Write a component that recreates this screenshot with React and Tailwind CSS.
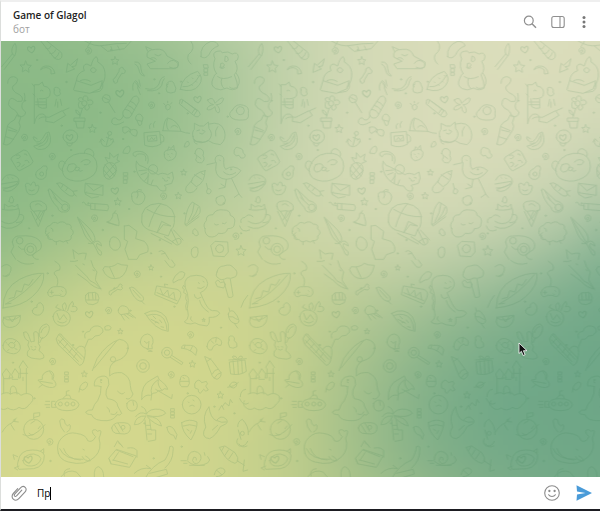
import { useEffect, useRef, useState } from "react";

const COLORS = [
  { rgb: [219, 221, 187], x: 0.65, y: 0.25 },
  { rgb: [136, 184, 132], x: 0.2, y: 0.1 },
  { rgb: [213, 216, 141], x: 0.35, y: 0.75 },
  { rgb: [107, 165, 135], x: 0.8, y: 0.9 },
];

// Four colour points blended by distance, on a plane twisted around its centre.
function paintGradient(canvas) {
  const { width, height } = canvas;
  const ctx = canvas.getContext("2d");
  const image = ctx.createImageData(width, height);
  for (let j = 0; j < height; j++) {
    for (let i = 0; i < width; i++) {
      const dx = i / (width - 1) - 0.5;
      const dy = j / (height - 1) - 0.5;
      const swirl = 0.35 * Math.hypot(dx, dy);
      const theta = swirl * swirl * 6.4;
      const px = Math.min(1, Math.max(0, 0.5 + dx * Math.cos(theta) - dy * Math.sin(theta)));
      const py = Math.min(1, Math.max(0, 0.5 + dx * Math.sin(theta) + dy * Math.cos(theta)));
      let sum = 0;
      const out = [0, 0, 0];
      for (const c of COLORS) {
        const w = Math.max(0, 0.9 - Math.hypot(px - c.x, py - c.y)) ** 4;
        sum += w;
        for (let k = 0; k < 3; k++) out[k] += w * c.rgb[k];
      }
      const at = (j * width + i) * 4;
      for (let k = 0; k < 3; k++) image.data[at + k] = out[k] / sum;
      image.data[at + 3] = 255;
    }
  }
  ctx.putImageData(image, 0, 0);
}

const TOP = [
  // brush, candy roll, kite
  "M2 80L34 42M10 88L40 48M34 42q-6-16 8-32q8 14 0 36zM120 4l40 50q14 10 22-2q4-14-8-20L136 2M134 24q10 8 16-6M146 40q12 4 18-10M160 54q10-2 14-16",
  "M250 2q30 20 60 14t66-6M270 4l-10 16M300 18l20 16l50-8l20-22M330 20l4 12M350 18l6 12",
  // arrow, bone, rainbow
  "M196 96l4-26l8 6l22-20l-6 22l-12 2l8 6zM120 88q16-12 30 2l0 12l12-2q-6-24-28-22q-14 2-14 10z",
  "M338 124q-4-8 4-10l12-20q-2-10 8-12q4-2 6 6q8 2 4 10q-4 4-10 2l-12 20q2 8-6 10q-6 0-6-6z",
  "M402 66q18-2 18 20q0 14 10 20M402 72q10 4 12 18q2 16 16 18",
  // rhino with book
  "M218 148l8-26l44 14l34-14l-6 24l-32 14l-44-8zM226 122q2-24 24-30q-8-18 8-20l12 6q6-24 16-28q6 6 4 16q20 10 22 32q2 26-14 44M270 86q8-8 16 4q-6 14-16 4zM238 122q14-8 30 2M304 128q6 16-8 26l-24 4",
  // cat flying
  "M438 50q-4-22 26-22q26-4 34 20l34 18q4 12-8 20l-76 0l-10-14l24-8zM440 34l-6-14l18 8M462 44q10 8 18 0M448 56q10-8 18 2M500 70q10-14 24-6q12 6 6 18q-14 6-24 0",
  "M570 4q16 22-8 40q-6 16 8 28M600 50q-4-34 30-46q20 0 22 14q-20 6-28 26q-12 16-24 6z",
  // dinosaur player
  "M100 250V134l14 0l10-8l4 12q26 4 18 30q-8 10-30 8M110 176l2 24q12 8 24 4l0-26M104 186h30M104 194h32M100 250q6-30 24-28q14 2 10 22l24 4l36-22l-10-14l-40 20q-22-4-30 4M186 212l18-8M118 152q4-4 8 0M100 140l-6-8M102 168l-6-6",
  // giraffe
  "M160 150q-4-8 6-8q14 2 10 14q8 8-8 12q-12-4-8-18zM166 178l-4 20M178 178l4 18M170 186l0 16",
  // snake
  "M20 130q0-20 18-20q20 4 6 22q-20 10 0 26q28 12 18 26q-14 4-22-6q-12-8-16 6q-6 10 6 20q22 10 22 26M70 160q6 20-6 30q-6 16 10 26q-2 16-18 14",
  // bottle
  "M8 312l12-56q8-12 20-16l8-16l12 6l-6 18q8 10 0 24l-24 36q-14 12-22 4zM20 260l28 12M14 290l24 8M22 270l24 6",
  // sausage, squid, worm
  "M396 150q-4-20 8-28q10 6 6 22l8 20M404 128l12 16M414 120l4 18M434 146q28 8 40-14q4-20 16-22M440 152q32 4 42-16q2-14 8-20",
  // watermelon
  "M538 148q4-40 52-54q20 20 4 42q-18 24-56 12zM546 140q30 4 50-34M560 126l2 2M574 114l2 2M584 124l2 2M572 134l2 2M590 106l2 2",
  // panda standing
  "M646 100q-14-20-4-44q-10-18 6-22q12-4 16 4q18-6 30 4q16-8 18 8q0 12-10 14q14 24-2 40q10 24 10 40q-16 10-32 0q-20 10-34 2q-18-10-8-30q4-12 10-16zM660 70q6-4 10 4q-2 10-10 8zM674 48q8 0 8 12q-4 8-10 4zM650 110q16 12 42 0M662 116q-6 18 8 30M706 100q16 20 4 40q-14 10-24 2M656 82q10 8 14 0",
  // flower
  "M250 190m-8 0a8 8 0 1 0 16 0a8 8 0 1 0-16 0M242 186q-14-4-8-12q10-4 12 6q-2-14 10-12q8 2 4 14q12-6 16 4q0 10-14 8q8 10-2 16q-10 2-8-12q-6 12-18 6q-4-10 0-18M244 206l-8 26M220 234h32v10h-32zM224 244l4 20h20l2-20M236 226q-14-6-12-16q12 2 12 16",
  // lollipop, rolled candy
  "M316 176m-12 0a12 12 0 1 0 24 0a12 12 0 1 0-24 0M308 172l16 8M322 186l20 32",
  "M366 216q-4 14 10 18q10 2 14-6l24-44q2-12-8-16q-10 0-12 6zM372 208q16 2 20 14M380 196q14 4 20 14M388 184q14 4 18 14M368 226q-10 24-24 8q-12-2-12 14q8 14 36-2",
  // duck, ghost, pencil
  "M498 140q-4-12 8-16q12-2 14 10q8 10 2 22q-14 6-24 0q-6-10 0-16zM502 132l-6 4M536 184q-2-6 6-6l52 36q8 10-2 16q-8 2-14-4l-42-34zM546 180l-4 10M582 206l-8 12M588 212l-8 12M552 184l36 28",
  "M494 198q6-10 14 0q2 10-8 12q-8-2-6-12zM488 190l3 4M500 184l0 4M512 188l-3 4",
  // fly, mushroom, bow, mug
  "M620 180q16-14 22 10q20-22 26-14q-4 18-22 18q14 12 8 24q-10 2-12-18q-16 14-24 8q2-12 20-14q-16-4-18-14z",
  "M404 232q4-14 16-8q10 8 4 20l-18-4zM408 242l6 14q10 2 8-12M366 262q-4 16 6 18l12-8q10 18 22 16q6-14 0-18q-8-4-16 0q-10-14-24-8zM384 266q6 0 4 10",
  "M430 278l46-4l4 38q-24 14-48 4zM478 284q14 0 10 20l-10 4M440 288l26-2l2 16l-26 2zM446 300l6-8l6 8l4-6M446 266q-4-10 4-16M458 262q-4-10 4-18",
  // cap, cat loaf
  "M486 272q4-36 14-38q30 6 40 40l-54-2zM500 236q-8 20 2 34M540 274q14 6 26 6M530 262q-10-12-20 0",
  "M576 290q-4-14 4-22l0-18l16 8h12l14-12l2 20q12 14 4 28q-10 18-34 10q-18 4-18-14zM624 252q36-10 46 20q8 26-12 42q-24-2-36-12M604 270l8 4M588 272l8-2M596 280q8 6 14-2M580 300q20 16 40 2M650 260q-10 12-6 28M580 298q-4 12 8 14",
  // fried egg
  "M694 210q12-22 34-14q18 4 14 24q4 20-16 20q-26 2-36-8q-10-12 4-22zM718 212m-12 0a12 12 0 1 0 24 0a12 12 0 1 0-24 0",
  // bananas, coin, anchor
  "M100 300q14 20 34-20l10-4q14 36-12 50q-24 8-34-8q14 0 22-10M100 300q-6-8-2-10l10 6M140 282q8 30-26 38M108 312q20 4 30-24",
  "M206 290m-20 2a22 20 0 1 0 44-4a22 20 0 1 0-44 4M198 308q-2 10 10 10q6-2 6-10",
  "M326 280m-6 0a6 6 0 1 0 12 0a6 6 0 1 0-12 0M324 286l-8 30M300 300q-2 18 16 20q16-2 20-16M296 306l6-10l8 8M328 300l8-4l2 10M316 292l16 6",
  // strawberry, peanut
  "M490 344q-4-12 12-14q20-6 24 8q0 22-24 24q-14-6-12-18zM500 330l4-10l6 6l8-10l2 14M500 342l2 2M512 340l2 2M506 350l2 2M582 340q2-18 16-14q14 6 8 20q8 14-4 22q-16 2-18-10q8-8-2-18zM590 348l10 8",
  // dice, avocado
  "M30 356q2-6 8-8l30-18q10 0 14 8l14 26q-2 8-10 12l-30 16q-6 0-10-8zM46 346q10-4 12 4q-4 8-10 6M70 342q8-2 8 4M48 368q8-4 10 4q-2 8-8 8M72 362q10-4 12 6M62 380l8-6",
  "M104 404q0-12 14-18q8-12 18-8q6 6 0 16q2 20-12 24q-18 2-20-14zM122 402m-6 0a6 6 0 1 0 12 0a6 6 0 1 0-12 0",
  // panda head
  "M184 386q10-40 52-46q40-4 50 24q8 34-18 48q-30 18-60 8q-26-8-24-34zM186 394q-20-12-10-28q8-8 18 4M250 340q0-14 14-14q18 6 14 22M204 374q18-8 22 4q-4 18-20 18q-14-6-2-22zM240 366q16-14 28-2q-2 12-18 10M222 384q8-6 14 0M236 386q-4 10-14 4M232 390q4 8 12 2",
  // pineapple
  "M308 384q6-18 22-16q16 2 16 20q-2 26-22 30q-20-2-16-34zM312 374l28 34M308 390l20 24M326 368l20 24M340 374l-30 34M346 392l-22 22M320 366l-8-14l14 4l0-18l12 14l14-10l-4 18l8 4l-14 6",
  // reclining cat
  "M434 362q4-20-12-20q-16-2-18 8q-10-2-8-10q10-10 30-4q22 10 14 34M406 364q-6 30 16 54q20 20 46 20q10 20 26 14q4-10-4-16l22-6q10-14 2-34l-14 8q-18-8-28 0q-10-4-16-10q-20-8-30-14q-12 0-20-16zM456 388m-14 0a14 14 0 1 0 28 0a14 14 0 1 0-28 0M414 392l24-2M420 404l16-6M440 430l2-30M484 414l6 4M500 412l6 2M490 422q6 4 10 0M430 424l12-16M450 434l6-14",
  // carrot ship, stork
  "M612 392q-34 6-42 34l16 14q26-12 26-48zM572 422l-16 18q-6 14 6 18q18 2 26-14M580 404l22 14M600 398l8 6",
  "M618 374l26-6q-6-22 12-22q16 2 12 22q0 14 6 20q24-16 46 4q-18 24-44 26q-30-2-32-30l2-20M656 360l2 2M668 396q16 16 36 2M676 418l-4 24l-18 4M692 416l22 46l-14 10M714 462l8 10M660 432l12 8",
  // burger, lotus
  "M4 420q10-22 34-14q22 8 14 26l-44 16M2 432l48-8M6 444q30 2 46-18M8 452q24 10 44-20M20 412l2 2M34 414l2 2M74 440q-4-12 8-10l8 6q4-14 12-8l2 10q10-6 10 4q-4 24-22 22q-16 2-18-24zM84 450q8 6 16 0",
  // jelly, carrots
  "M142 452q-2-8 6-4l36 34q20 4 22 18q0 18-18 16q-14 2-18-14q-22-20-28-50zM150 450l18 30M192 502m-10 0a10 10 0 1 0 20 0a10 10 0 1 0-20 0M158 472l24 22",
  "M168 430q8-6 20 4l28 20q8 10 0 14q-10 2-18-6q-20-12-30-32zM186 434l-4 8M200 444l-6 8M216 454l12-2M218 462l8 6",
  // letter
  "M254 430l52 6l0 30l-54-8zM254 430l24 22l28-16M256 456l-4 6l20 12l20-4",
  // ice cream, cigarette
  "M88 500q-4-14 12-16q20-4 26 4q14 4 10 22q-14 6-22 2l-16 2q-10-4-10-14zM90 514l22 46l20-50M98 514l20 30M118 514l-12 26M128 512l-14 22M104 494q10-8 18 4",
  "M270 490l50 4q6 8 0 18l-50-4zM282 492l0 16M270 498l-16-4q-4-12-10-6",
  // cup cat
  "M4 508q20 6 50-2q6 20-10 38q-20 14-42 0M54 524q16-4 14 12q-4 12-22 12M10 506l0-14l12 8q12-6 20 0l8-8l2 14M2 560q30 16 62-14",
  // peach, balloon
  "M392 470q-4-16 14-14q22-6 26 14q-2 22-20 24q-20-2-20-24zM410 456q4 10-2 18M406 454q6-10 16-4",
  "M422 546q-6-54 52-56q54 8 46 58q-2 18-10 20l-8 20l-44-14q-32-6-36-28zM444 560q10-40 36-70M468 578l14-34l28 14l-22-4zM438 508q40 24 84 22M450 580l62 32M510 568l20 42M490 590l28 18M514 604l14-8q14-4 12 12q-10 12-18 4zM518 570l28 30",
  // sandwich, cloud
  "M552 546q4-44 22-60l22 14q6 20-8 28l-34 26zM562 544q16-26 18-54M572 538q14-16 20-36M552 552l4 6l38-28",
  "M612 566q-8-12 4-24q-2-18 20-18q8-18 32-14q20 0 20 16q18 6 12 26q0 14-20 14q-4 18-28 14q-8 14-28 10q-14-8-12-24zM640 552q4 6 12 2M664 550q8 4 12-2",
  "M720 548q-4-14 12-16q10-14 24-2M716 558q6 22 30 12",
  // sheep
  "M134 574q-2-14 14-18q8-14 22-6q16-10 26 2q18 0 14 14q14 12 0 22q4 14-14 14q-8 8-20 0q-16 8-22-4q-18 4-12-12q-12-2-8-12zM144 578l-8 8l12 10M150 564q8 2 6 10M166 606l0 8M196 602l4 8",
  // pen, bell
  "M230 532l28 26q26 24 24 44l-10 6q-20-14-26-36zM234 538l40 66M262 610q14 4 22-6q14-4 18 14l-14-8q-6 6 4 18q14 6 8 18q-8 0-12-14q-8-18-14-24M318 546q18-4 18-26q14-4 14 10q6 16 4 26zM322 548l24 8M340 518l4-6M370 558l14-2l24 18l-4 22l26 8q16 16 10 32l-24 8l-8 14l-26 0M370 558v40l10 6l-8 24l10 28",
  // monkey
  "M34 606q4-20 22-18q40-4 58 12q12 14 4 28l-24 16q4 16 18 14M34 606l4 14l-8 16l14 22M88 628m-18 0a18 18 0 1 0 36 0a18 18 0 1 0-36 0M88 628m-10 0a10 10 0 1 0 20 0a10 10 0 1 0-20 0M56 602m-10 0a10 10 0 1 0 20 0a10 10 0 1 0-20 0M52 620q10 12 18 8",
  "M326 604q4-18 18-12q16 8 14 26q-6 16-20 12q-16-8-12-26zM630 616l12-12l38 2l2 30l-12 14l-32-2zM656 626m-12 0a12 12 0 1 0 24 0a12 12 0 1 0-24 0M572 628q8-12 18-4q4 14-2 26q-8 6-14 0q-6-10-2-22M474 634q8-6 16 2l14 22M482 642l10-2",
  "M216 630l4 26M216 630l16 12q14-4 24-2l-4 18M24 484q2-14 8-16q10 12 4 20q-8 4-12-4zM700 330q4-12 14-6q14 2 12 14q12 8 2 16q-10 4-14-8q-10 6-14-4zM608 74h12l2 10h-12zM610 86h10v10h-10zM610 98h10v8h-10zM368 398h12v8h-12zM368 410h12v8h-12zM368 420h10v10h-10zM616 430l4 16q12 0 10 10q-4 10-12 4q-4-6 2-14",
  "M646 474q14-10 22-6q10 12 2 24q-16 8-22-2q-6-8-2-16zM576 580q-4-10 6-14q12 8 10 18q-8 8-16-4zM366 338q2-16 18-20q8 12-2 22zM550 320q2-16 12-16q8 12-4 16z",
];

const BOTTOM = [
  // surfboard, gamepad
  "M6 144q0-60 50-86q40-20 72-18q4 36-34 70q-30 28-88 34zM14 132q60-30 106-88M24 116l16-4l6-20l16 4l8-24l14 4l12-18M30 130l-16 2M162 4q20 10 14 26q-18 2-16 12q16 14 8 36M140 98q6-20 26-18q30-4 30 18q-4 18-22 8h-14q-18 12-20-8zM152 92v10M147 97h10M182 92l2 2M178 102l2 2",
  // fox
  "M208 4q14 2 22-2M224 16l34 34q6 14 24 20l18 18M300 86q-20 0-42-24l-28-20M270 2q4 20 18 34q-6 20-4 26l14 22M306 30q10 26 36 26q30 0 38-40q-20 0-30-6q-16 14-38 10zM326 22l14 30M246 12l4 2M276 30l4 2",
  // fist, bone
  "M254 106q6-12 18-8q12-4 18 4q8 12 0 26q-14 10-28 4q-12-6-8-26zM262 100l2 20M274 98l2 20M284 100l0 18M256 120h34M324 100q-2-8 6-8l22-12q2-10 8-8q6 4 2 8q6 6-2 10l-10-2l-18 12q0 8-6 4z",
  // ice pop, soda
  "M386 84q6-6 14 0l26 26q6 14-8 14q-20-6-32-40zM396 90l22 24M420 122l10 10M468 78l60 10q16 6 10 24l-10 20l-66-28zM478 86l8 20l14-16l4 20l14-14l4 22M468 98l60 24M492 80l-2-8l10 2M516 60q4-14 20-24q8-4 16 4q-4 20-20 20l-14 8z",
  // dinosaur
  "M552 80q-6-34 34-34q30 0 34 24q0 18-22 28l8 18q14 34 28 36q18-2 22 8q-8 14-32 12q4 18-6 26l-24-4q-12-10-24-2q-14 0-20-6q12-8 12-20q-6-20 0-44q0-22-10-42zM580 104q0 10 10 12l10-4M596 122q4 20 26 34M570 170q-6 8 4 14M592 68l3 2M606 64l3 2M590 84q10 6 20-4M548 76l-4 8l6 4l-2 10l8 4l-2 14l4 8l-4 14l2 12",
  // tree, icecream
  "M648 36q4-18 20-18q22-8 30 6q16 10 6 26q-16 8-26 4q-18 10-26 0q-10-4-4-18zM644 66q6-12 14 2q10-6 16 4l-6 12l-18-4zM668 62l14 50q14 2 14-6l-8-48M682 162q4-14 16-8q14 14 16 28q-2 12-14 8q-18-6-18-28zM684 170q14-2 20 6q6 4 8 2M700 190l10 14M686 152l-2-8M720 142q6-20 20-36",
  // muscle, kraken, jellyfish
  "M94 152q4-12 14-10q-2-12 10-14q14 8 8 26q-8 16-24 10q-10-4-8-12zM156 170q4-22 26-20q26 4 26 26q-4 24-28 22q-22-4-24-28zM168 160l8 20l12-16l10 14M170 184q14 10 26 0M188 150q-10-16 4-22q8 10 2 20M200 152q4-20 14-28q8 8 0 16q16-4 14 10q-6 8-18 4M178 148l-14-6l6-8M352 150q4-16 18-12q16 4 14 22l-24 4q-10-4-8-14zM360 164l10 16M370 164l14 12M378 162l18 10M384 158l20 16",
  // boat
  "M8 172l50-6q2 22-14 32q-20 10-34-2q-8-10-2-24zM8 174q24 16 50-6M24 172l10 14l10-16",
  // pizza half
  "M432 160q36-20 62 10q12 20 8 44q-40-4-70-54zM440 166q30-10 48 10q10 16 10 34M456 168l8 8M476 180l6 8M462 188q6-6 12 2M480 200l8 2M450 178l20 10",
  // bunny and racket
  "M68 218q8-8 14 6l8 22q4-2 10-2l-2-26q8-8 14 4q2 20 0 28q10 10 2 22q18 12 14 22q-10 6-24 2q-14 0-24-8q-4-14 6-20q-10-14-2-24q-16-6-16-26zM114 222q0-26 22-30q12 4 8 20q-6 20-22 24q-8-4-8-14zM120 218q4-16 16-18M124 232l-8 16M90 260l3 1M102 260l3 1M92 268q6 6 12 0",
  // donut
  "M6 256q6-24 28-20q26 8 24 30q-8 20-30 14q-24-6-22-24zM22 254q4-10 14-6q10 6 4 14q-12 6-18-8zM14 246l4 4M44 244l-4 4M48 268l-6-2M20 272l4-4",
  // slide
  "M166 236l8-14q8-2 10 6l66 66q-2 20-14 22l-64-62zM176 226l66 72M172 240l60 64M186 236l-12 14M200 250l-12 14M214 264l-10 14M228 278l-10 14M250 296q6-22 0-34q-16-10-26 8M252 234q-6-18 14-20q6-18 24-16q16 2 16 18q-10 14-24 12q-8 14-20 10q-4 10-10 24",
  // fishing rod
  "M274 332l14-36q30-46 68-58q26 4 26 26q-4 24-24 34q-30 8-32 30l0 20q10-12 36-10q26 12 26 38q0 14 8 26q-8 20-20 14M280 324l66-80M336 298m-8 0a8 8 0 1 0 16 0a8 8 0 1 0-16 0M350 394q14 14 20 4",
  // bulb
  "M418 246q2-22 22-24q18 4 16 26q-6 8-2 18l-16 0q-20-6-20-20zM430 244l8 6l6-6l-2 20M438 268l16 6l-12 0",
  // lollipop, croissant, gift
  "M498 278m-16 0a16 16 0 1 0 32 0a16 16 0 1 0-32 0M498 278m-8 0a8 8 0 1 0 16 0a8 8 0 1 0-16 0M512 286l34 22l-4 6l-34-22M542 264q0-12 14-8q28-2 32 14l-4 16l-10-10q-14-10-32-12zM552 256l-2 8M574 260l-6 12M618 260q2-26 28-28q22 8 14 24q-8 2-12-4q-14 6-16 18q-12 2-14-10zM630 242l8 8M646 234l-2 12M684 240q-4-14 10-12q10 4 6 14q10 6 8 18q-12 8-22 2q-8-14-2-22z",
  "M686 306l46-6l4 34q-20 14-46 8zM684 300l52-4M696 302l4 40M710 302l2 40M722 300l2 38M706 298q-16-4-10-10q10-2 14 10q6-14 14-8q2 8-12 8",
  // ball, pen
  "M426 318m-19 0a19 19 0 1 0 38 0a19 19 0 1 0-38 0M426 318m-10 0a10 10 0 1 0 20 0a10 10 0 1 0-20 0M612 290l18 8l30 40q2 14-12 20q-10-2-14-10zM618 304l12-8M640 354q8-14 20-16M634 342q6-14 16-14",
  // castle on cloud
  "M8 400v-46l-4-12l12-16l12 16l-4 12h12l-4-10l10-18l12 16l-2 12l6 0v-28l-4-4l12-20l14 20l-4 4v74M28 402q-2-24 8-24t12 24M56 340h24M10 356h16M34 358h16M66 352l0 10M2 402q16-8 26 0q20-10 32 4q20-12 34 2q6 14-8 24q-14 22-32 10q-16 14-34 2q-14 10-26-2q-12-8-4-20",
  // ufo, fish, sub
  "M112 360l12-2q-4-20 22-26q18 6 10 26q14 14 6 22q-14 8-38-6zM118 364l36 6M146 334q12 12 8 24M124 374l-10 8M236 386q2-16 18-20l6 4q0 14-14 20zM236 386l-2 10M162 434q2-18 34-18q34 0 38 18q-4 18-36 18t-36-18zM186 416q8-14 20-10l4 10M196 406v-12l8-2M178 432m-6 0a6 6 0 1 0 12 0a6 6 0 1 0-12 0M198 432m-6 0a6 6 0 1 0 12 0a6 6 0 1 0-12 0M216 432m-6 0a6 6 0 1 0 12 0a6 6 0 1 0-12 0M162 424l-10 0v18h12M146 424h-12M146 434h-14M146 442h-10",
  // nessie
  "M300 380q-10-4-20-2q-2-18 12-26q24-10 30 6q6 16-6 32q-4 16 4 26q30 4 30 22l12 22q-4 8-14 4q-8 16-30 18q-40 2-46-18q-16 0-18-8q8-8 20-6q6-20 16-28q12-20 10-42zM298 366l4 2M318 442q10 6 8 14M330 462q14 6 18-6M378 430q10-16 26-6q10 14 0 26q-16 8-24-4q-4-6-2-16zM396 424l2 12",
  // umbrella
  "M422 418q-2-46 28-58l20-12l4 10q24 18 26 30q-10-6-18 4q-12-2-16 6q-12 0-18 8q-14-4-26 12zM470 360q-26 16-18 44M472 360q-4 16 10 30M464 388l48 28l2-12M452 404l-2 16",
  // cupcake, puzzle, planet
  "M538 358q0-12 12-12q14 2 14 14q4 12-4 20l-18 0q-10-8-4-22zM538 364h26M546 352l4 4M584 366q10-12 18 2l14-4q8 8-2 14l8 12q-8 8-14-2l-10 12q-8-2-6-12l-10-4q-4-14 2-18M686 376q6-14 20-8q4 12-8 16q-12 0-12-8zM680 382q20-2 32-14M572 434m-28 0a28 28 0 1 0 56 0a28 28 0 1 0-56 0M562 426l2 2M576 420l3 2M566 438q8-6 14 0",
  // moon sleeper
  "M614 500q-12-32 10-60q4 34 22 42q14-18 28-6q10 10 0 16l-16 8q-12 26-32 36q-22-2-18-20zM648 482q14 8 28 4M634 510l16-14M654 450l8-14l6 12M664 440l8-12l12 10l4-20l6 10M718 410q0-20 16-22M716 416q10 24 26 14",
  // planet
  "M98 508m-30 0a30 30 0 1 0 60 0a30 30 0 1 0-60 0M66 524q28 16 66-30M98 476v-16l18-2v10l-16 4M90 490l12-8M84 520q6 8 14 4M112 506l6-8M4 516q10-20 30-28l12-14M30 494l10 16M36 484l16 2",
  // palm
  "M404 470q12-18 32-8q0-18-14-22M436 462q10-18 40-14q16 4 18 12q-18 16-56 6M434 468q-30-2-34 26q22 2 34-24M440 470q34-2 42 28q-20-4-42-26M432 480l6 60M446 480l4 30l14 0l0 30l-22 4M436 496h12M438 508h12M440 522h12",
  // burrito, fish, pizza, rocket
  "M332 504q4-16 24-16q30-2 32 12q2 20-18 22l-26-2q-12-4-12-16zM340 494l16 26M352 490l14 24M366 502m-6 0a6 6 0 1 0 12 0a6 6 0 1 0-12 0M498 502q8-8 20 4l10 18l-4 14l-6-12q-18-2-20-24zM542 488q24-14 46-2q2 18-18 54q-28-24-28-52zM546 498q20-8 40 0M558 508l6 4M572 512l-4 8M710 500q0-16 14-22q20 20 18 46M712 510l8 28M724 520m-6 0a6 6 0 1 0 12 0a6 6 0 1 0-12 0M710 536q-8 14 6 22q18 2 24-14",
  // whale
  "M172 580q-8-28 10-46q20-20 44-14q30 4 34 22q14 8 24-12q-14-12-8-20q8-4 14 4q10-6 10 2q-2 12-6 18q10 34-12 56q-30 30-80 16q-24-6-30-26zM176 566q14 34 70 32M188 566q10 32 50 34M246 568l4 2M190 516q-14-14-14-34q6-10 14-2q0 14 10 18q4-8 8-2q2 14-10 20M244 590q6 14 24 12q-4-10-14-14",
  // books
  "M324 594l22-26l60 20l-20 34l-54-10zM324 596l6 16M346 570l50 20M340 560l10-18l16 20M352 578l-16 24M380 564q20-4 28 8l0 20M352 548l12 10M336 600l44 12",
  // croc
  "M432 656q20-40 60-56q14-24 14-40q14-6 10 14q0 28-24 50M400 640q20-20 50-14l-14-10M446 640l50-12l4 14l-40 12",
  // ham, snail, bottle, worm
  "M52 602q4-32 42-32q32 0 36 16q0 34-32 40l-44 2q-8-10-2-26zM66 602q6-20 32-20q20 4 22 14q-6 20-28 22q-24 2-26-16zM50 590l-14-6l4 14M54 618l-14 6l10 6M118 574l10-8l0 12",
  "M560 600q0-24 20-26q22 4 20 22q-6 18-20 14q-10-8-2-18q10-2 8 8M560 604q20 18 48 10q16-4 18-14l-6-10M612 586l-2-8M566 616h44M540 602h16M548 610h10",
  "M656 562l16-4l30 20q12 16 8 26l-8 6q-24-8-34-26zM668 562l-6 10M682 570l-10 16M696 578l-12 18M708 602l22 14M730 600l-4 34l14-4",
  "M180 650q20-24 46-14l14 16M190 648q-6-20 16-22M280 650q-2-28 12-30q16 6 16 30M640 644q4-18 18-20q14 0 14 12q-10 14-26 14M646 630l16 14M714 552q8 14 24 6",
  "M192 336h10v8h-10zM192 348h10v8h-10zM192 358h10v8h-10zM510 446h10v8h-10zM510 456h10v8h-10zM510 466h10v8h-10zM492 2l14 18q14 6 16-6l-10-14M50 2q20 16 48 8M2 20q18-14 28 2q2 20-16 26M312 200q12-8 18 2q0 8-6 8h-10zM6 48q12 6 20-4",
];

const TOP_STARS = [[74, 80, 17], [342, 62, 12], [274, 266, 12], [350, 485, 11], [532, 467, 10], [548, 397, 9], [720, 632, 15]];
const BOTTOM_STARS = [[358, 214, 8], [250, 342, 9], [574, 312, 10], [658, 405, 10], [450, 23, 8], [608, 180, 5]];
const TOP_HEARTS = [[91, 28, 12], [357, 160, 13], [206, 292, 11], [590, 178, 12], [342, 452, 12]];
const BOTTOM_HEARTS = [[265, 163, 12], [82, 598, 13]];
const TOP_SWIRLS = [[70, 292], [153, 349], [262, 32], [451, 195], [280, 534], [487, 468], [710, 274], [704, 588]];
const BOTTOM_SWIRLS = [[408, 42], [322, 151], [154, 304], [510, 344], [146, 545], [568, 224]];
const DOTS = [
  [108, 60], [330, 30], [196, 126], [72, 182], [460, 118], [560, 220], [182, 257], [366, 297], [210, 330], [298, 218],
  [474, 160], [400, 395], [262, 490], [154, 527], [84, 565], [384, 507], [305, 570], [476, 600], [668, 490], [690, 388],
  [540, 125], [680, 230], [450, 640], [550, 520], [720, 580], [92, 785], [388, 812], [246, 875], [36, 968], [340, 745],
  [480, 710], [520, 800], [660, 863], [430, 1150], [300, 1020], [380, 925], [148, 1263], [640, 1100], [542, 1220], [40, 1140],
  [216, 915], [100, 1075], [458, 1255], [560, 1060], [700, 1120], [140, 700],
];

function Star({ x, y, r }) {
  return (
    <path
      transform={`translate(${x} ${y}) scale(${r / 10})`}
      strokeWidth={26 / r}
      d="M0-10L3-3L10-2L5 3L6 10L0 6L-6 9L-5 2L-10-3L-3-3z"
    />
  );
}

function Heart({ x, y, r }) {
  return (
    <path
      transform={`translate(${x} ${y}) rotate(-8) scale(${r / 10})`}
      d="M0 9Q-11 2-9-5Q-5-10 0-3Q6-10 9-4Q10 3 0 9z"
    />
  );
}

function Swirl({ x, y }) {
  return <path transform={`translate(${x} ${y})`} d="M-3 1Q-2-5 3-2Q6 5-2 6Q-10 4-8-4Q-3-12 6-8Q13-1 8 7Q3 11-3 10" />;
}

function Doodles() {
  const tiles = [0, 1, 2, 3, 4, 5, 6, 7];
  return (
    <svg className="absolute inset-0 h-full w-full" aria-hidden="true">
      <defs>
        <g id="doodles" fill="none" stroke="#3c7d54" strokeWidth="2.6" strokeLinejoin="round" strokeLinecap="round">
          <g transform="translate(0 -3)">
            {TOP.map((d) => <path key={d} d={d} />)}
            {TOP_STARS.map(([x, y, r]) => <Star key={x} x={x} y={y} r={r} />)}
            {TOP_HEARTS.map(([x, y, r]) => <Heart key={x} x={x} y={y} r={r} />)}
            {TOP_SWIRLS.map(([x, y]) => <Swirl key={x} x={x} y={y} />)}
            {DOTS.map(([x, y]) => <circle key={`${x}-${y}`} cx={x} cy={y} r="2" />)}
          </g>
          <g transform="translate(0 657)">
            {BOTTOM.map((d) => <path key={d} d={d} />)}
            {BOTTOM_STARS.map(([x, y, r]) => <Star key={x} x={x} y={y} r={r} />)}
            {BOTTOM_HEARTS.map(([x, y, r]) => <Heart key={x} x={x} y={y} r={r} />)}
            {BOTTOM_SWIRLS.map(([x, y]) => <Swirl key={x} x={x} y={y} />)}
          </g>
        </g>
      </defs>
      <g transform="scale(0.33333)" opacity="0.17">
        {tiles.map((n) => <use key={n} href="#doodles" x={n * 740} />)}
      </g>
    </svg>
  );
}

function Wallpaper() {
  const ref = useRef(null);
  useEffect(() => paintGradient(ref.current), []);
  return (
    <>
      <canvas ref={ref} width="120" height="88" className="absolute inset-0 h-full w-full" />
      <Doodles />
    </>
  );
}

function Header() {
  return (
    <header className="flex h-[39px] shrink-0 items-center justify-between bg-white pl-3 pr-2.5">
      <div>
        <h1 className="text-[10px] leading-[14px] font-semibold text-[#222]">Game of Glagol</h1>
        <p className="text-[10px] leading-[14px] text-[#a0a0a0]">бот</p>
      </div>
      <div className="flex items-center gap-3 text-[#8f8f8f]">
        <button type="button" aria-label="Search" className="flex size-4 items-center justify-center">
          <svg width="16" height="16" viewBox="0 0 16 16" fill="none" stroke="currentColor" strokeWidth="1.2">
            <circle cx="6.8" cy="6.6" r="4.4" />
            <path d="M10 9.8l4 4" strokeWidth="1.5" />
          </svg>
        </button>
        <button type="button" aria-label="Toggle info panel" className="flex size-4 items-center justify-center">
          <svg width="16" height="16" viewBox="0 0 16 16" fill="none" stroke="currentColor" strokeWidth="1.1">
            <rect x="1.8" y="2.5" width="12.4" height="11" rx="2" />
            <path d="M10 2.5v11" />
          </svg>
        </button>
        <button type="button" aria-label="Menu" className="flex w-3 items-center justify-center">
          <svg width="4" height="16" viewBox="0 0 4 16" fill="#777">
            <circle cx="2" cy="3.5" r="1.5" />
            <circle cx="2" cy="8" r="1.5" />
            <circle cx="2" cy="12.5" r="1.5" />
          </svg>
        </button>
      </div>
    </header>
  );
}

function Composer() {
  const [text, setText] = useState("Пр");
  return (
    <form
      className="flex h-[32px] shrink-0 items-center bg-white pr-1.5 pl-2"
      onSubmit={(e) => e.preventDefault()}
    >
      <button type="button" aria-label="Attach" className="flex size-5 items-center justify-center">
        <svg width="20" height="20" viewBox="0 0 20 20" fill="none" stroke="#8c8c8c" strokeWidth="1.1" strokeLinecap="round">
          <path d="M12.8 7.2l-5 5.500c-.8.9-1.700.9-2.200.4s-.5-1.400.3-2.200l5.600-6.100c1.500-1.600 3.400-1.700 4.700-.5s1.200 3.100-.1 4.500l-6.300 6.900c-1.600 1.700-3.900 1.900-5.500.4s-1.600-3.900 0-5.600l4.400-4.800" />
        </svg>
      </button>
      <label className="flex flex-1 items-center pl-2">
        <span className="sr-only">Message</span>
        <input
          type="text"
          value={text}
          onChange={(e) => setText(e.target.value)}
          className="field-sizing-content h-5 min-w-0 bg-transparent text-[10px] leading-5 text-black caret-transparent outline-none"
        />
        <span className="h-[13px] w-px bg-black" />
      </label>
      <button type="button" aria-label="Emoji" className="flex size-5 items-center justify-center">
        <svg width="18" height="18" viewBox="0 0 18 18" fill="none" stroke="#8c8c8c" strokeWidth="1.1" strokeLinecap="round">
          <circle cx="9" cy="9" r="7.3" />
          <path d="M5.6 10.8c1.6 2.2 5.2 2.2 6.8 0" />
          <circle cx="6.4" cy="7" r=".6" fill="#8c8c8c" />
          <circle cx="11.6" cy="7" r=".6" fill="#8c8c8c" />
        </svg>
      </button>
      <button type="submit" aria-label="Send" className="ml-3 flex size-5 items-center justify-center">
        <svg width="18" height="18" viewBox="0 0 18 18" fill="#4a9bd8">
          <path d="M1.5 1.2L17 9 1.500 16.800 2 10.600 10.500 9 2 7.400z" />
        </svg>
      </button>
    </form>
  );
}

export default function App() {
  return (
    <div className="flex h-screen flex-col border-t-2 border-b-2 border-l border-t-[#efefef] border-b-[#1d1d22] border-l-[#dcdedc] font-['Open_Sans','Noto_Sans',sans-serif]">
      <Header />
      <main className="relative flex-1 overflow-hidden">
        <Wallpaper />
      </main>
      <Composer />
      <svg className="absolute top-[342px] left-[518px]" width="10" height="15" viewBox="0 0 10 15" aria-hidden="true">
        <path d="M1 1v10.500l2.400-2.200 1.700 4.200 2-.8-1.700-4H9z" fill="#111" stroke="#fff" strokeWidth=".8" />
      </svg>
    </div>
  );
}
